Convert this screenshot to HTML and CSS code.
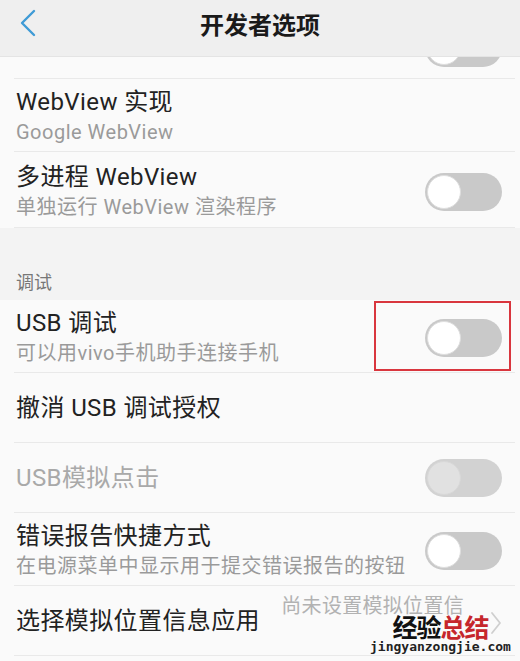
FILE: index.html
```html
<!DOCTYPE html>
<html lang="zh-CN">

<head>
    <meta charset="UTF-8">
    <meta name="viewport" content="width=device-width, initial-scale=1.0">
    <title>开发者选项</title>
    <link rel="stylesheet" href="styles.css">
</head>

<body>
    <div class="screen">
        <div class="topbar">
            <div class="back">
                <svg width="18" height="28" viewBox="0 0 18 28">
                    <polyline points="15,2 3,14 15,26" fill="none" stroke="#3f9bd6" stroke-width="2.4" stroke-linecap="round" stroke-linejoin="round"/>
                </svg>
            </div>
            <h1>开发者选项</h1>
            <div></div>
        </div>

        <div class="list">
            <div class="row row-cut">
                <span class="switch"></span>
            </div>

            <div class="row row-two">
                <div class="texts">
                    <div class="title">WebView 实现</div>
                    <div class="sub">Google WebView</div>
                </div>
            </div>

            <div class="row row-two row-tall">
                <div class="texts">
                    <div class="title">多进程 WebView</div>
                    <div class="sub">单独运行 WebView 渲染程序</div>
                </div>
                <span class="switch"></span>
            </div>
        </div>

        <div class="category">调试</div>

        <div class="list">
            <div class="row row-two marked">
                <div class="texts">
                    <div class="title">USB 调试</div>
                    <div class="sub">可以用vivo手机助手连接手机</div>
                </div>
                <span class="switch"></span>
                <div class="highlight"></div>
            </div>

            <div class="row row-one">
                <div class="title">撤消 USB 调试授权</div>
            </div>

            <div class="row row-one">
                <div class="title disabled">USB模拟点击</div>
                <span class="switch off"></span>
            </div>

            <div class="row row-two">
                <div class="texts">
                    <div class="title">错误报告快捷方式</div>
                    <div class="sub">在电源菜单中显示用于提交错误报告的按钮</div>
                </div>
                <span class="switch"></span>
            </div>

            <div class="row row-one">
                <div class="title">选择模拟位置信息应用</div>
                <div class="value">尚未设置模拟位置信</div>
                <svg class="chevron" width="12" height="24" viewBox="0 0 12 24">
                    <polyline points="2,2 10,12 2,22" fill="none" stroke="#cfcfcf" stroke-width="1.8" stroke-linecap="round" stroke-linejoin="round"/>
                </svg>
                <div class="mark">
                    <div class="mark-cn">经验<span>总结</span></div>
                    <div class="mark-en">jingyanzongjie.com</div>
                </div>
            </div>
        </div>
    </div>
</body>

</html>
```

FILE: styles.css
```css
body {
    margin: 0;
    padding: 0;
    background-color: #fafafa;
    font-family: Roboto, 'Noto Sans CJK SC', sans-serif;
    color: #222;
}

.screen {
    width: 520px;
    height: 661px;
    overflow: hidden;
}

.topbar {
    height: 57px;
    display: grid;
    grid-template-columns: 1fr auto 1fr;
    align-items: start;
    background-color: #efefef;
    border-bottom: 1px solid #e4e4e4;
    box-sizing: border-box;
}

.back {
    padding: 9px 0 0 19px;
}

.topbar h1 {
    margin: 0;
    padding-top: 7px;
    font-size: 24px;
    line-height: 34px;
    font-weight: bold;
    color: #1a1a1a;
    font-family: 'Noto Sans CJK SC', sans-serif;
}

.list {
    background-color: #fafafa;
}

.row {
    position: relative;
    display: flex;
    align-items: center;
    margin: 0 5px 0 14px;
    padding: 0 13px 0 2px;
    border-bottom: 1px solid #e9e9e9;
}

.row-cut {
    height: 21px;
    overflow: hidden;
    justify-content: flex-end;
    align-items: flex-end;
    padding-bottom: 0;
}

.row-cut .switch {
    margin-bottom: 11px;
}

.row-two {
    padding-top: 8px;
    padding-bottom: 4px;
}

.row-tall {
    padding-top: 10px;
    padding-bottom: 5px;
}

.row-one {
    height: 69px;
}

.texts {
    flex: 1;
}

.title {
    font-size: 24px;
    line-height: 30px;
    letter-spacing: 0.4px;
    white-space: nowrap;
}

.title.disabled {
    color: #a9a9a9;
}

.sub {
    font-size: 20px;
    line-height: 30px;
    letter-spacing: 0.5px;
    color: #9a9a9a;
    white-space: nowrap;
}

.switch {
    position: relative;
    flex: none;
    margin-left: auto;
    width: 77px;
    height: 38px;
    border-radius: 19px;
    background-color: #c9c9c9;
}

.switch::after {
    content: '';
    position: absolute;
    left: 2px;
    top: 2px;
    width: 32px;
    height: 32px;
    border-radius: 50%;
    background-color: #fff;
    border: 1px solid #dedede;
}

.switch.off {
    background-color: #d2d2d2;
}

.switch.off::after {
    background-color: #e1e1e1;
    border-color: #d8d8d8;
}

.highlight {
    position: absolute;
    left: 360px;
    top: 1px;
    right: 4px;
    bottom: 1px;
    border: 2px solid #d9363e;
}

.category {
    height: 72px;
    box-sizing: border-box;
    padding: 43px 0 0 16px;
    font-size: 18px;
    line-height: 24px;
    color: #777;
    background-color: #f3f3f3;
}

.value {
    margin-left: auto;
    align-self: flex-start;
    margin-top: 6px;
    font-size: 20px;
    line-height: 28px;
    color: #b2b2b2;
    letter-spacing: 0.3px;
    white-space: nowrap;
    padding-right: 26px;
}

.chevron {
    flex: none;
    margin-top: 4px;
}

.mark {
    position: absolute;
    left: 356px;
    top: 27px;
    text-align: center;
}

.mark-cn {
    font-family: 'Noto Sans CJK SC', sans-serif;
    font-size: 25px;
    line-height: 26px;
    font-weight: bold;
    color: #111;
    letter-spacing: -1px;
}

.mark-cn span {
    color: #c6262c;
}

.mark-en {
    font-family: 'DejaVu Sans Mono', monospace;
    font-size: 13px;
    line-height: 16px;
    color: #222;
    font-weight: bold;
}
```
